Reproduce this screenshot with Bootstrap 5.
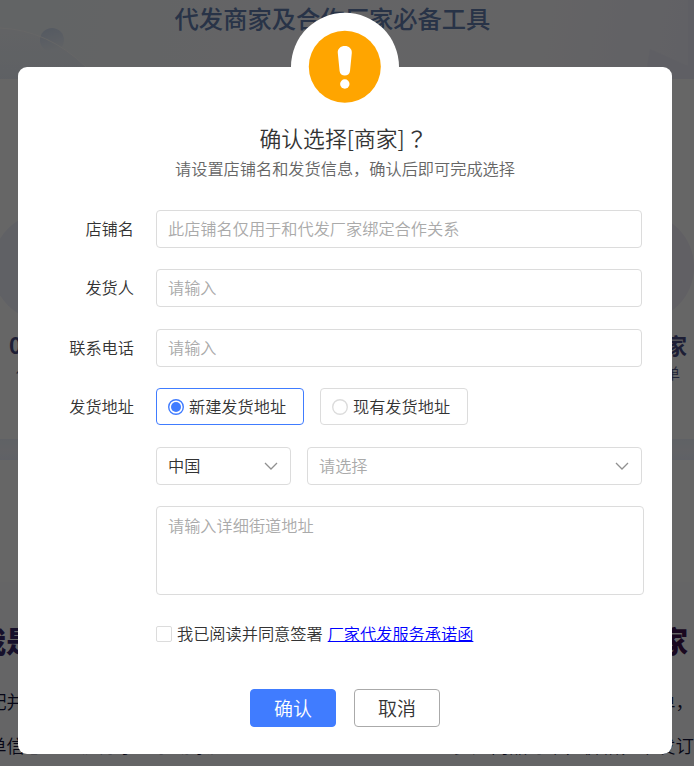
<!DOCTYPE html>
<html lang="zh-CN">
<head>
<meta charset="utf-8">
<meta name="viewport" content="width=device-width, initial-scale=1">
<title>确认选择</title>
<link href="https://cdn.jsdelivr.net/npm/bootstrap@5.3.0/dist/css/bootstrap.min.css" rel="stylesheet">
<style>
body{font-family:"Noto Sans CJK SC",sans-serif;font-size:16.2px;font-weight:350;line-height:24px;color:#333}
.stage{height:766px}
/* page behind the dialog */
.hero{height:79px;background:linear-gradient(100deg,#f5f9fc 0,#fafafe 40%,#fbfafd 75%,#f2f2fc 100%);color:#647fb2;font-size:24.3px;font-weight:500;line-height:36px}
.hero-art{left:0;top:0}
.hero-title{padding-left:19px}
.roles{height:360px;padding-top:134px}
.disc{width:108px;height:108px;border-radius:50%;background:#f0f2fd}
.disc-l{margin-left:-8px}
.disc-r{background:#f2effa}
.role-name{font-size:22px;font-weight:700;line-height:28px;color:#4a4b85;margin-top:9px;padding:0 7px 0 9px}
.role-note{font-size:15px;line-height:30px;color:#555a88;padding:0 14px 0 16px}
.band{height:21px;background:linear-gradient(#eef3fd,#f4f6fd 50%,#eef2fe)}
.gap-zone{height:122px}
.plans{height:184px;background:#fcfdff;padding-top:36px}
.plan-name{font-size:29px;font-weight:900;line-height:44px;color:#37296b;padding-right:6px}
.plan-name span:first-child{margin-left:-23px}
.plan-name span:last-child{color:#421650}
.plan-line{font-size:18.5px;line-height:44px;color:#101038}
.line-a{margin-top:17px}
.pull-a,.pull-b{margin-left:-12px}
.shade{background:rgba(0,0,0,.6)}
/* dialog */
.dialog-wrap{padding:67px 22px 12px 18px}
.panel{height:687px;border-radius:9px}
.halo{width:108px;height:108px;top:-55px;left:273px}
.head-block{padding-top:56px}
.title-line{font-size:21.8px;line-height:30px;margin:0;font-weight:350;padding-right:3px}
.title-mark{font-family:"Noto Sans CJK TC",sans-serif;margin-left:1px}
.sub-line{color:#666;line-height:28px;margin:1px 0 0}
.form-block{padding:28px 30px 0 0}
.field-row{min-height:38px;margin-bottom:21.3px}
.field-label{width:116px;margin-right:22px;text-align:right;flex:none;padding-bottom:2px}
.field{height:38px;border:1px solid #dcdcdc;border-radius:4px;padding:0 11px 2px;font-size:16.2px;font-weight:350;color:#333;line-height:24px}
.field::placeholder{color:#aaa;opacity:1}
.field:focus{box-shadow:none;border-color:#407cff}
.field svg{margin-top:2px}
.option{width:148px;height:37px;border:1px solid #dcdcdc;border-radius:4px;padding:0 11px}
.option.on{border-color:#407cff}
.option svg{margin-right:5px}
.option span{padding-bottom:1px}
.country{width:135px}
.hint{color:#aaa}
.area{width:488px;height:89px;resize:none;padding:6px 11px;margin-right:-2px;flex:none}
.tick{width:16px;height:16px;border:1px solid #dcdcdc;margin:0 5px 0 0;float:none}
.tick[type=checkbox]{border-radius:2px}
.agree{padding-left:138px;margin-top:26px}
.agree-text{padding-bottom:1px}
.agree a{color:#00f;margin-left:5px}
.act{width:86px;height:38px;padding:0;font-size:19px;font-weight:350;border-radius:4px;line-height:34px}
.act-ok{background:#407cff;border-color:#407cff;color:#fff}
.act-no{border-color:#aaa;color:#333;background:#fff}
.acts{gap:18px;padding-top:43px}
</style>
</head>
<body>
<div class="stage position-relative overflow-hidden bg-white">
  <main class="text-nowrap" aria-hidden="true">
    <div class="hero position-relative">
      <svg class="hero-art position-absolute" width="694" height="79" viewBox="0 0 694 79">
        <defs>
          <linearGradient id="orb" x1="0" y1="0" x2=".3" y2="1"><stop offset="0" stop-color="#d2dff4"/><stop offset="1" stop-color="#f0f5fc"/></linearGradient>
          <linearGradient id="hill" x1="0" y1="0" x2="0" y2="1"><stop offset="0" stop-color="#f5f8fc"/><stop offset="1" stop-color="#e8eefa"/></linearGradient>
        </defs>
        <path d="M0 28Q48 30 86 67V79H0Z" fill="url(#hill)" opacity=".7"/>
        <circle cx="52" cy="40" r="12" fill="url(#orb)"/>
        <path d="M0 28Q48 30 86 67" fill="none" stroke="#fff" stroke-width="1"/>
        <path d="M650 49L688 66V0H694V79H645Z" fill="#ececfa" opacity=".8"/>
      </svg>
      <div class="text-center position-relative pe-5"><span class="hero-title">代发商家及合作厂家必备工具</span></div>
    </div>
    <div class="roles">
      <div class="d-flex justify-content-between"><div class="disc disc-l"></div><div class="disc disc-r"></div></div>
      <div class="role-name d-flex justify-content-between"><span>08商家</span><span>厂家</span></div>
      <div class="role-note d-flex justify-content-between"><span>代发</span><span>接单</span></div>
    </div>
    <div class="band"></div>
    <div class="gap-zone"></div>
    <div class="plans">
      <div class="plan-name d-flex justify-content-between"><span>我是商家</span><span>我是厂家</span></div>
      <div class="plan-line line-a d-flex justify-content-between"><span class="pull-a">配并发货</span><span>接单，</span></div>
      <div class="plan-line d-flex justify-content-between"><span class="pull-b">单信息、一键分享、手动录入</span><span>多厂商品订单，价格，下发订</span></div>
    </div>
  </main>

  <div class="shade dialog-wrap position-absolute top-0 start-0 w-100 h-100" role="dialog" aria-modal="true">
    <section class="panel bg-white position-relative">
      <svg class="halo position-absolute" viewBox="0 0 108 108" aria-hidden="true">
        <circle cx="54" cy="54.8" r="54" fill="#fff"/>
        <circle cx="53.8" cy="54.8" r="36" fill="#ffa500"/>
        <path d="M53.8 34C57.9 34 61.2 36.7 60.8 41L59 59C58.6 65 49 65 48.600 59L46.800 41C46.400 36.700 49.700 34 53.800 34Z" fill="#fff"/>
        <circle cx="53.8" cy="72" r="4.700" fill="#fff"/>
      </svg>
      <header class="head-block text-center position-relative">
        <h1 class="title-line">确认选择[商家]<span class="title-mark" lang="zh-TW">？</span></h1>
        <p class="sub-line">请设置店铺名和发货信息，确认后即可完成选择</p>
      </header>
      <form class="form-block">
        <div class="field-row d-flex align-items-center"><label class="field-label" for="shop">店铺名</label><input id="shop" class="form-control field" placeholder="此店铺名仅用于和代发厂家绑定合作关系"></div>
        <div class="field-row d-flex align-items-center"><label class="field-label" for="sender">发货人</label><input id="sender" class="form-control field" placeholder="请输入"></div>
        <div class="field-row d-flex align-items-center"><label class="field-label" for="phone">联系电话</label><input id="phone" class="form-control field" placeholder="请输入"></div>
        <div class="field-row d-flex align-items-center">
          <span class="field-label">发货地址</span>
          <div class="d-flex gap-3">
            <div class="option on d-flex align-items-center text-nowrap"><svg width="16" height="16" viewBox="0 0 16 16"><circle cx="8" cy="8" r="7.3" fill="#fff" stroke="#407cff" stroke-width="1.400"/><circle cx="8" cy="8" r="5" fill="#407cff"/></svg><span>新建发货地址</span></div>
            <div class="option d-flex align-items-center text-nowrap"><svg width="16" height="16" viewBox="0 0 16 16"><circle cx="8" cy="8" r="7.3" fill="#fff" stroke="#dcdcdc" stroke-width="1.400"/></svg><span>现有发货地址</span></div>
          </div>
        </div>
        <div class="field-row d-flex align-items-center">
          <span class="field-label"></span>
          <div class="d-flex gap-3 flex-grow-1">
            <div class="field country d-flex align-items-center justify-content-between">中国<svg width="16" height="10" viewBox="0 0 16 10"><path d="M2 2L8 8L14 2" fill="none" stroke="#909090" stroke-width="1.300"/></svg></div>
            <div class="field hint flex-grow-1 d-flex align-items-center justify-content-between">请选择<svg width="16" height="10" viewBox="0 0 16 10"><path d="M2 2L8 8L14 2" fill="none" stroke="#909090" stroke-width="1.300"/></svg></div>
          </div>
        </div>
        <div class="d-flex"><span class="field-label"></span><textarea class="form-control field area" placeholder="请输入详细街道地址"></textarea></div>
        <div class="agree d-flex align-items-center text-nowrap"><input class="form-check-input tick" type="checkbox" id="ok"><label class="agree-text" for="ok">我已阅读并同意签署</label><a class="agree-text" href="#">厂家代发服务承诺函</a></div>
      </form>
      <div class="acts d-flex justify-content-center"><button type="button" class="btn act act-ok">确认</button><button type="button" class="btn act act-no">取消</button></div>
    </section>
  </div>
</div>
<script src="https://cdn.jsdelivr.net/npm/bootstrap@5.3.0/dist/js/bootstrap.bundle.min.js"></script>
</body>
</html>
